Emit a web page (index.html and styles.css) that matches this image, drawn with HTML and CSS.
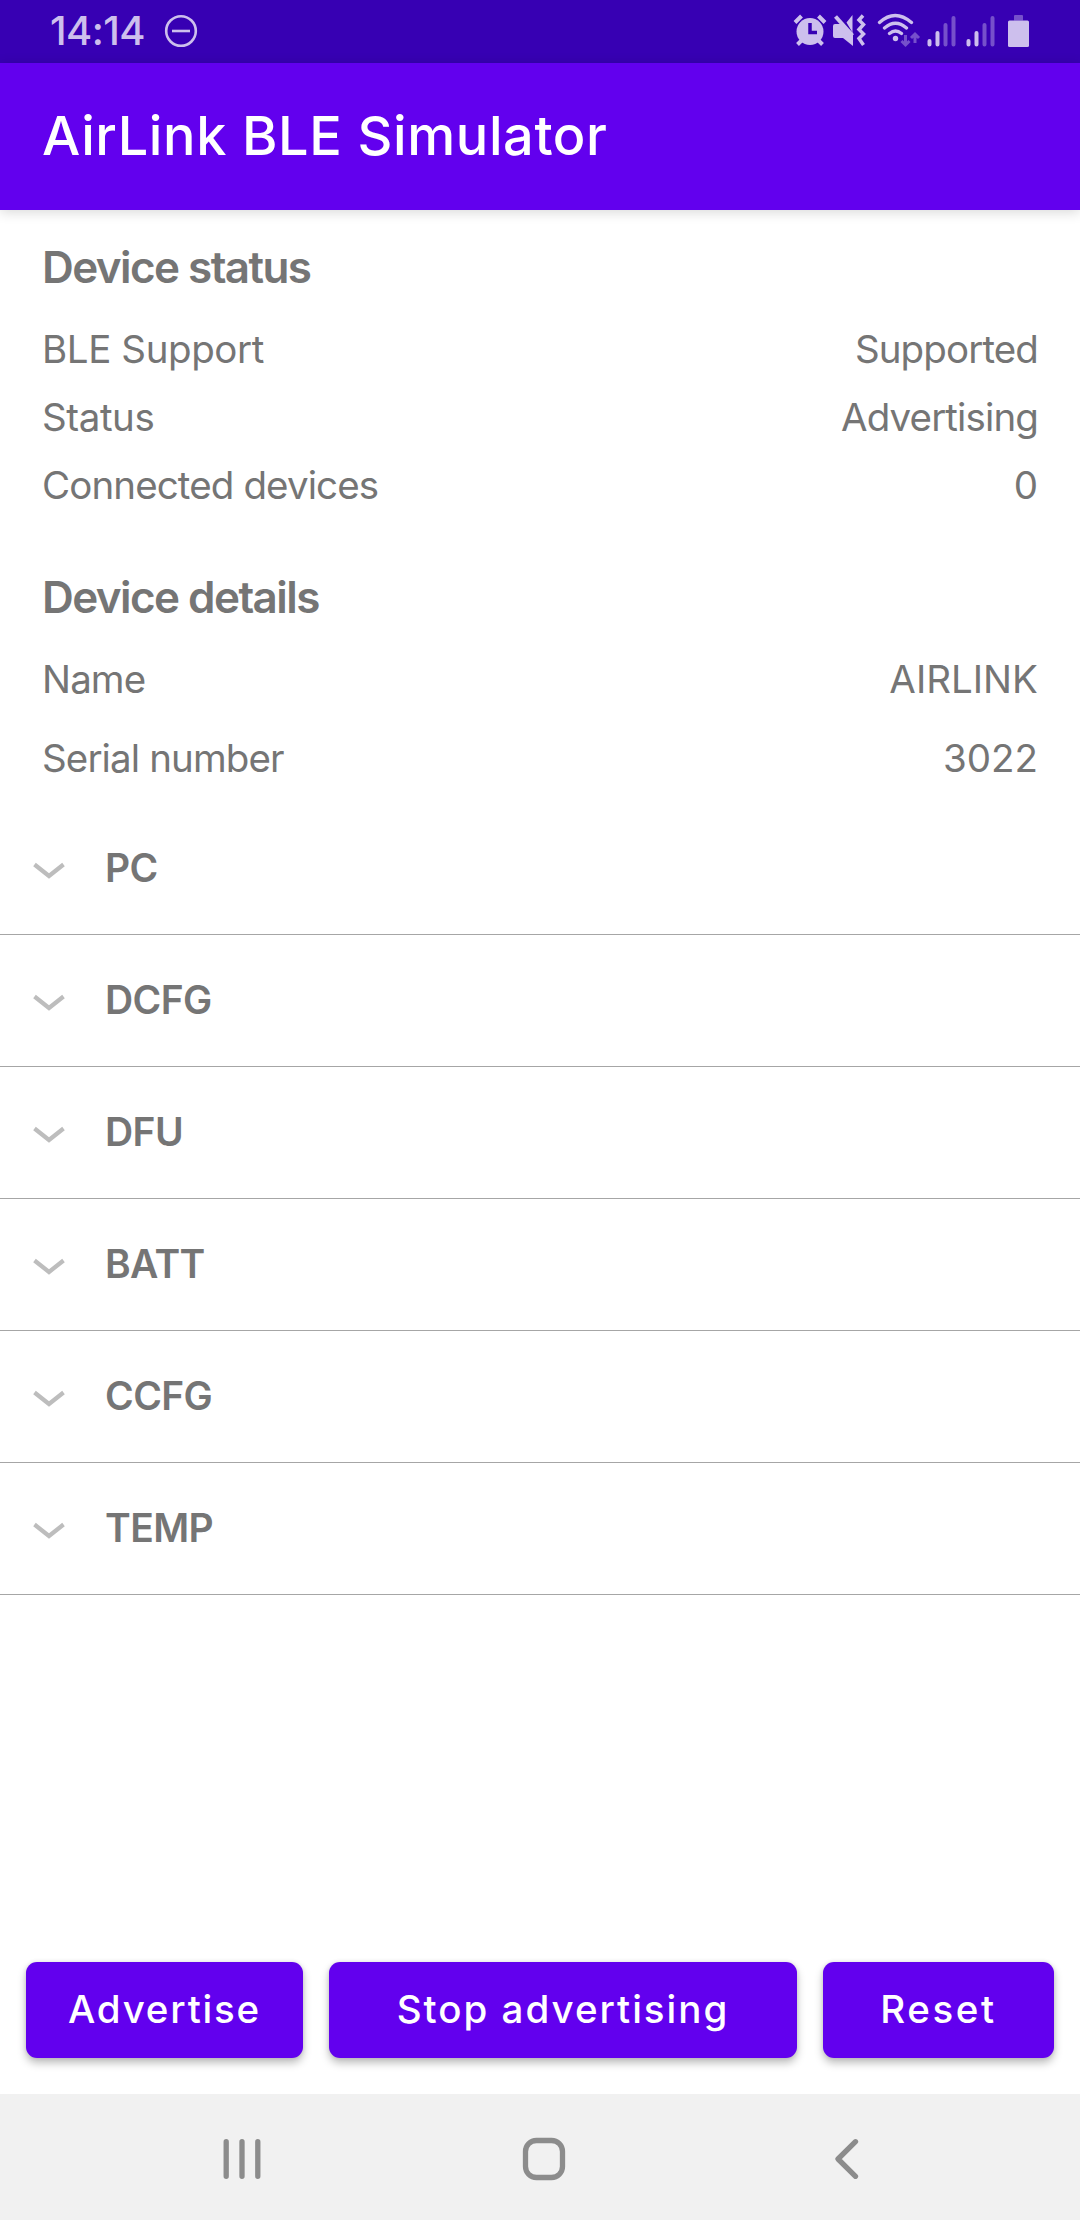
FILE: index.html
```html
<!DOCTYPE html>
<html lang="en">
<head>
<meta charset="utf-8">
<title>AirLink BLE Simulator</title>
<link rel="stylesheet" href="styles.css">
</head>
<body>
<div class="screen">
  <div class="statusbar">
    <span class="clock">14:14</span>
    <svg class="dnd" width="34" height="34" viewBox="0 0 34 34" fill="none"><circle cx="17" cy="17" r="14.8"/><path d="M8 17h18"/></svg>
    <svg class="tray" width="260" height="40" viewBox="0 0 260 40">
      <circle class="solid" cx="20" cy="20.500" r="13.5"/>
      <path class="line" d="M5 11.500l6.500-6.500M28.500 5l6.500 6.500M12 29l-4.500 4.500M28 29l4.500 4.500"/>
      <path class="cut" d="M20 12v9.500h7"/>
      <path class="solid" d="M45 13h8l10 9v13L53 27h-8q-2 0-2-2V15q0-2 2-2zM62.500 4v17.500L56.500 11.500z"/>
      <path class="line" d="M45.500 5.500l17 19"/>
      <path class="line thin" d="M73 4.500l-4 4.500 4.500 4.500-4.500 5 4.500 4.500-4.500 4.500 4.500 6.500"/>
      <path class="arcs" d="M89.500 11.500Q105-2.500 121.500 11.500M94.500 17Q105.500 7.500 116.500 17M99.500 22.500Q105.500 17.500 111.500 22.500"/>
      <circle class="solid" cx="105.500" cy="27.500" r="2.700"/>
      <path class="dim arrow" d="M115.500 24v10M111.500 30l4 4 4-4M125 32v-9M121 27l4-4 4 4"/>
      <path class="bars" d="M139.500 30v3.500M147.500 22v11.500M178.500 30v3.500M186.500 22v11.500"/>
      <path class="bars dim" d="M155.500 14v19.500M163.500 7v26.500M194.500 14v19.500M202.500 7v26.500"/>
      <path class="dimfill" d="M224 5q0-1 1-1h7q1 0 1 1v4.500h-9z"/>
      <rect class="solid" x="218" y="9.500" width="21" height="26.500" rx="1.500"/>
    </svg>
  </div>
  <header class="appbar"><h1 class="title">AirLink BLE Simulator</h1></header>
  <main class="content">
    <section class="block">
      <h2 class="heading">Device status</h2>
      <div class="row"><span class="mixed">BLE Support</span><span>Supported</span></div>
      <div class="row"><span class="mixed">Status</span><span>Advertising</span></div>
      <div class="row"><span>Connected devices</span><span class="caps">0</span></div>
    </section>
    <section class="block details">
      <h2 class="heading">Device details</h2>
      <div class="row"><span>Name</span><span class="caps">AIRLINK</span></div>
      <div class="row"><span>Serial number</span><span class="caps">3022</span></div>
    </section>
    <ul class="services">
      <li class="service"><svg class="chev" width="34" height="20" viewBox="0 0 34 20"><path d="M2.500 3.500L17 15 31.500 3.500"/></svg><span>PC</span></li>
      <li class="service"><svg class="chev" width="34" height="20" viewBox="0 0 34 20"><path d="M2.500 3.500L17 15 31.500 3.500"/></svg><span>DCFG</span></li>
      <li class="service"><svg class="chev" width="34" height="20" viewBox="0 0 34 20"><path d="M2.500 3.500L17 15 31.500 3.500"/></svg><span>DFU</span></li>
      <li class="service"><svg class="chev" width="34" height="20" viewBox="0 0 34 20"><path d="M2.500 3.500L17 15 31.500 3.500"/></svg><span>BATT</span></li>
      <li class="service"><svg class="chev" width="34" height="20" viewBox="0 0 34 20"><path d="M2.500 3.500L17 15 31.500 3.500"/></svg><span>CCFG</span></li>
      <li class="service"><svg class="chev" width="34" height="20" viewBox="0 0 34 20"><path d="M2.500 3.500L17 15 31.500 3.500"/></svg><span>TEMP</span></li>
    </ul>
  </main>
  <div class="actions">
    <button class="btn start">Advertise</button>
    <button class="btn">Stop advertising</button>
    <button class="btn reset">Reset</button>
  </div>
  <nav class="navbar">
    <svg width="42" height="44" viewBox="0 0 42 44"><path d="M5.200 4.700v34.600M21 4.700v34.600M36.800 4.700v34.600"/></svg>
    <svg class="home" width="44" height="44" viewBox="0 0 44 44"><rect x="3.500" y="3.500" width="37" height="37" rx="11"/></svg>
    <svg class="back" width="30" height="44" viewBox="0 0 30 44"><path d="M23.500 4.700L6 22l17.500 17.300"/></svg>
  </nav>
</div>
</body>
</html>
```
FILE: styles.css
```css
* { box-sizing: border-box; margin: 0; padding: 0; }
body { font-family: Inter, "Liberation Sans", sans-serif; background: #fff; color: #757575; }
.screen { width: 1080px; height: 2220px; display: flex; flex-direction: column; background: #fff; overflow: hidden; }

.statusbar { height: 63px; flex: none; background: #3700b3; display: flex; align-items: center; padding: 0 40px 2px 50px; }
.clock { font-size: 40px; font-weight: 500; color: #cdbfed; width: 114px; line-height: 61px; white-space: nowrap; letter-spacing: -0.600px; }
.dnd { stroke: #cdbfed; stroke-width: 2.600; }
.tray { margin-left: auto; margin-right: -10px; }
.solid { fill: #cdbfed; }
.line { fill: none; stroke: #cdbfed; stroke-width: 4; }
.thin { stroke-width: 3.500; }
.cut { fill: none; stroke: #3700b3; stroke-width: 3.500; }
.arcs { fill: none; stroke: #cdbfed; stroke-width: 3.300; stroke-linecap: round; }
.bars { fill: none; stroke: #cdbfed; stroke-width: 4; stroke-linecap: round; }
.dim { stroke: #7650cb; }
.arrow { fill: none; stroke-width: 3; }
.dimfill { fill: #7650cb; }

.appbar { height: 147px; flex: none; background: #6200ee; display: flex; align-items: center; padding: 0 42px 3px; box-shadow: 0 2px 12px rgba(0, 0, 0, 0.16); }
.title { font-size: 54px; font-weight: 500; color: #fff; white-space: nowrap; letter-spacing: 0.620px; }

.content { flex: 1; padding-top: 30px; }
.block { display: flex; flex-direction: column; gap: 20px; padding: 0 42px; }
.heading { font-size: 44px; line-height: 54px; font-weight: 600; margin-bottom: 11px; letter-spacing: -1.570px; }
.row { display: flex; justify-content: space-between; font-size: 38.500px; line-height: 48px; font-weight: 430; letter-spacing: -0.880px; }
.mixed { letter-spacing: -0.400px; }
.caps { letter-spacing: 0; }
.details { gap: 31px; margin-top: 61px; }
.details .heading { margin-bottom: 0; }
.services { list-style: none; margin-top: 21px; }
.service { height: 132px; border-bottom: 1px solid #a6a6a6; display: flex; align-items: center; padding: 0 0 2px 32px; gap: 39px; font-size: 39px; font-weight: 600; letter-spacing: -0.600px; }
.chev { fill: none; stroke: #bdbdbd; stroke-width: 4.200; margin-top: 6px; }

.actions { flex: none; display: grid; grid-template-columns: 277px 468px 231px; gap: 26px; padding: 0 26px; margin-bottom: 36px; }
.btn { height: 96px; border: 0; border-radius: 11px; background: #6200ee; color: #fff; font: 500 38.500px/90px Inter, "Liberation Sans", sans-serif; letter-spacing: 2px; padding-bottom: 2px; box-shadow: 0 5px 8px rgba(0, 0, 0, 0.26), 0 0 4px rgba(0, 0, 0, 0.1); }
.start { letter-spacing: 1.800px; }
.reset { letter-spacing: 2.600px; }

.navbar { height: 126px; flex: none; background: #f1f1f1; display: flex; align-items: center; padding: 4px 0 0 221px; fill: none; stroke: #8c8c8c; stroke-width: 5.300; stroke-linecap: round; stroke-linejoin: round; }
.home { margin-left: 259px; }
.back { margin-left: 266px; }
```
